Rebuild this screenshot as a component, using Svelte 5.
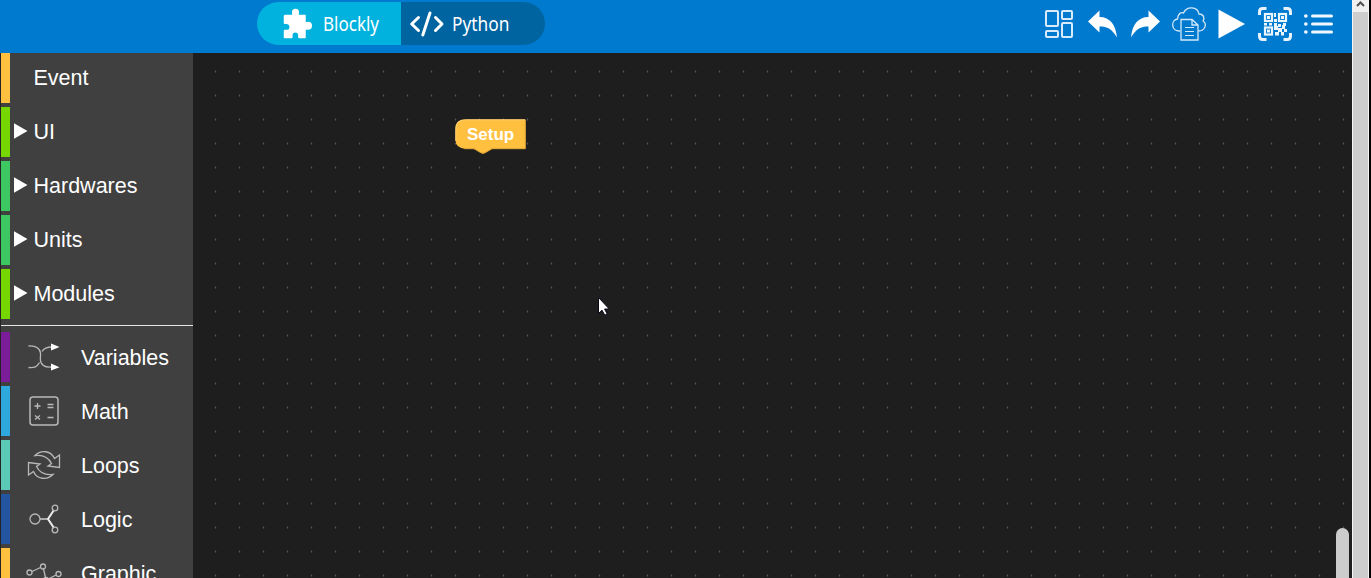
<script>
  const groups = [
    { name: 'Event', color: '#ffbf3f', open: false },
    { name: 'UI', color: '#76d700', open: true },
    { name: 'Hardwares', color: '#3cc763', open: true },
    { name: 'Units', color: '#3cc763', open: true },
    { name: 'Modules', color: '#76d700', open: true }
  ];
  const tools = [
    { name: 'Variables', color: '#7b1d99' },
    { name: 'Math', color: '#2fa8dd' },
    { name: 'Loops', color: '#5bcbb8' },
    { name: 'Logic', color: '#2355a0' },
    { name: 'Graphic', color: '#ffbf3f' }
  ];
</script>

<div class="app">
  <div class="main">
    <header>
      <div class="modes">
        <div class="mode active">
          <svg class="puzzle" width="30" height="31" viewBox="0 0 30 31" fill="#fff" stroke="#fff" stroke-width="1.500" stroke-linejoin="round"><path d="M2 7.500h7.500c1 0 .2-1.700.2-3.200a2.800 2.800 0 0 1 5.600 0c0 1.500-.8 3.200.5 3.200H22V14c0 1.300 1.500.5 3 .5a3.300 3.300 0 0 1 0 6.600c-1.500 0-3-1-3 .4V29.500h-5.500c-1.300 0-.3-1.300-.5-2.700a3.700 3.700 0 0 0-7.300 0c0 1.400.8 2.700-.5 2.700H1.500V23c0-1 .8-.4 2-.4a3.700 3.700 0 0 0 0-7.400c-1.200 0-2 .6-2-.4V8Z"/></svg>
          <span class="lb">Blockly</span>
        </div>
        <div class="mode python">
          <svg width="36" height="27" viewBox="0 0 36 27" fill="none" stroke="#fff" stroke-width="3" stroke-linecap="round" stroke-linejoin="round"><path d="M9.500 7.500 2.700 14l6.800 6.500M26.500 7.500 33 14l-6.500 6.500M21 3l-7.200 22"/></svg>
          <span class="lp">Python</span>
        </div>
      </div>
      <svg class="actions" width="296" height="40" viewBox="1042 2 296 40" fill="none" stroke="#fff">
        <g stroke="#d8ebfa" stroke-width="2"><rect x="1046" y="11" width="12" height="15" rx="1"/><rect x="1062" y="11" width="10" height="8" rx="1"/><rect x="1046" y="31" width="12" height="6" rx="1"/><rect x="1062" y="23" width="10" height="14" rx="1"/></g>
        <path d="M1088 21.500 1099.500 10.500v6.500c10.500 0 16.500 8 17.400 20.500-4.900-8.500-9.400-11-17.400-11v6Z" fill="#fff" stroke="none"/>
        <path d="M1160 21.500 1148.500 10.500v6.500c-10.500 0-16.500 8-17.400 20.500 4.900-8.500 9.400-11 17.400-11v6Z" fill="#fff" stroke="none"/>
        <g stroke="#d4e9f8" stroke-width="1.300"><path d="M1180 31c-9 .5-9.500-11-2.500-12 .5-6 4-7 6-6 3-7 14-7 15.500 1 4.500 0 6 4 4 7 4.500 3 2 10-4.500 10"/><path d="M1181 19.500h11l6 5.500v15h-17zM1192 19.500v5.500h6"/><path d="M1185 27.500h9m-9 4h9m-9 4h9" stroke-width="1"/></g>
        <path d="M1218.500 9.500 1245 24l-26.500 14.500Z" fill="#fff" stroke="none"/>
        <g stroke="#e6f3fc" stroke-width="3"><path d="M1259.500 15v-3q0-3.500 3-3.500h4M1283.500 8.500h4q3 0 3 3.500v3M1290.500 33v3q0 3.500-3 3.500h-4M1266.500 39.500h-4q-3 0-3-3.500v-3"/></g>
        <g stroke="#eaf5fd" stroke-width="2.200"><rect x="1265" y="14" width="7" height="7"/><rect x="1279" y="14" width="7" height="7"/><rect x="1265" y="27.500" width="7" height="7"/></g>
        <path d="M1267 16h3v3h-3zm14 0h3v3h-3zm-14 13.500h3v3h-3zM1274 13h2v4h-2zm0 6h3v3h-3zM1264 23h3v2.500h-3zm5 0h3v2.500h-3zm5 0h3v3h-3zm4 1h3v3h-3zm5-1h3v3h-3zM1274 26h4v4h-4zm4 2h4v4h-4zm4-3h3v4h-3zM1275 32h4v3.500h-4zm6 0h3v3.500h-3zm3-3h3v3h-3z" fill="#eaf5fd" stroke="none"/>
        <g stroke="#f1f8fd"><path d="M1312.500 16h19m-19 8h19m-19 8h19" stroke-width="3" stroke-linecap="round"/><path d="M1305.800 16h.1m-.1 8h.1m-.1 8h.1" stroke-width="3.600" stroke-linecap="round"/></g>
      </svg>
    </header>
    <div class="body">
      <nav>
        {#each groups as g}
          <div class="row group"><i style:background={g.color}></i><span class="tri">{#if g.open}<svg width="14" height="16" viewBox="0 0 14 16"><path d="M0 .3 13.500 8 0 15.700Z" fill="#fff"/></svg>{/if}</span><span>{g.name}</span></div>
        {/each}
        <hr />
        {#each tools as t}
          <div class="row"><i style:background={t.color}></i>
            <svg class="icon" width="36" height="34" viewBox="26 0 36 34" fill="none" stroke="#b8b8b8" stroke-width="1.300">
              {#if t.name === 'Variables'}
                <path d="M28.500 6c7-.5 11 1.500 12 7 .3 3-.5 5 0 8 1 4.500 4 6.500 11 6M28.500 27.500c6 .5 8.500-.5 11-5M42 11.500c2-3.500 5-4.500 10-4.500"/><path d="m51 3.500 8.500 3.500-8.500 3.500Zm0 20 8.500 3.700-8.500 3.300Z" fill="#fff" stroke="none"/>
              {:else if t.name === 'Math'}
                <rect x="30" y="3" width="28" height="28" rx="3" stroke-width="1.500"/><path d="M34.500 12h6m-3-3v6M47.500 10.500h6m-6 3h6M35 21.500l5 4m0-4-5 4M47.500 23.500h6"/>
              {:else if t.name === 'Loops'}
                <path d="M35 7.500c6-6 16-5 19.500 3l5-3.500v12.500l-11.500-1.500 3.500-2.500c-3-6-8.500-9-16.500-8Z M53 26.500c-6 6-16 5-19.500-3l-5 3.500v-12.500l11.500 1.500-3.500 2.500c3 6 8.500 9 16.500 8Z"/>
              {:else if t.name === 'Logic'}
                <circle cx="35" cy="17" r="5"/><path d="M40 17h7.500" stroke-width="1.800"/><path d="m54 8-6 9 6 9" stroke="#eee" stroke-width="2"/><circle cx="55" cy="6" r="2.800"/><circle cx="55" cy="28" r="2.800"/>
              {:else}
                <circle cx="29.500" cy="16.500" r="2.500"/><circle cx="43" cy="10.500" r="2.500"/><circle cx="58.500" cy="18" r="2.500"/><circle cx="46" cy="24" r="2.500"/><path d="m32 15.500 8.500-4M43.500 13l2 8.500M48.500 23l7.500-4"/>
              {/if}
            </svg><span class="label">{t.name}</span></div>
        {/each}
      </nav>
      <main>
        <svg class="dots" width="1159" height="525"><defs><pattern id="grid" x="10" y="6" width="24" height="24" patternUnits="userSpaceOnUse"><path d="M12 11h1v3h-1z" fill="#3c3c3c"/><path d="M12 12h1v1h-1z" fill="#505050"/><path d="M11 12h3v1h-3z" fill="#666" opacity=".15"/></pattern></defs><rect width="1159" height="525" fill="url(#grid)"/></svg>
        <svg class="block" width="72" height="36" viewBox="0 0 72 36"><path d="M10.500.5H70.500v29.500H37l-7 4q-2 1-4 0l-7-4H10.500Q.5 29 .5 21V9.500Q.5.5 10.500.5Z" fill="#ffbf3f"/><path d="M.8 22V9.500Q.8.800 10.500.8H70" fill="none" stroke="#ffd27a"/><path d="M70.300 1v28.700H37l-7 4q-2 1-4 0l-7-4H9.500" fill="none" stroke="#d9a236"/><text x="12" y="20.500">Setup</text></svg>
        <svg class="cursor" width="13" height="20" viewBox="0 0 13 20"><path d="M.5.5v16l3.500-3.300 2.800 5 2.400-1.200-2.600-5h4.700Z" fill="#fff" stroke="#080818"/></svg>
        <div class="thumb"></div>
      </main>
    </div>
  </div>
  <aside><div class="up"><svg width="9" height="6" viewBox="0 0 9 6"><path d="m1 5 3.500-3.500L8 5" fill="none" stroke="#505050" stroke-width="2"/></svg></div></aside>
</div>

<style>
  :global(body) { margin: 0; overflow: hidden; background: #000; }
  .app { display: flex; width: 1371px; height: 578px; overflow: hidden; font-family: "Liberation Sans", Arial, sans-serif; color: #fff; }
  .main { width: 1352px; height: 578px; display: flex; flex-direction: column; }
  header { height: 53px; flex: none; box-sizing: border-box; background: #007acf; display: flex; justify-content: space-between; align-items: flex-start; padding: 2px 14px 0 257px; }
  .modes { display: flex; width: 288px; height: 43px; border-radius: 22px; overflow: hidden; }
  .mode { display: flex; align-items: center; width: 144px; background: #0064a1; font: 19px/28px "Noto Sans", sans-serif; white-space: nowrap; box-sizing: border-box; }
  .active { background: #00b2dd; padding-left: 26px; }
  .mode span { display: block; transform-origin: 0 50%; }
  .lb { margin-left: 10px; transform: scaleX(.895); }
  .python { padding-left: 8px; }
  .lp { margin-left: 7px; transform: scaleX(.91); }
  .body { display: flex; height: 525px; }
  nav { width: 192px; border-left: 1px solid #242424; height: 525px; overflow: hidden; background: #404040; flex: none; }
  .row { display: flex; align-items: center; height: 50px; margin-bottom: 4px; font-size: 21.500px; line-height: 26px; }
  .row i { width: 9px; height: 50px; flex: none; }
  .tri { width: 19.500px; margin-left: 4px; padding-bottom: 3px; display: flex; }
  .icon { margin-left: 16px; }
  .label { margin-left: 19px; padding-top: 2px; }
  hr { height: 1px; margin: 6px 0; border: 0; background: #e4e4e4; }
  main { position: relative; width: 1159px; background: #1e1e1e; overflow: hidden; }
  .dots { display: block; }
  .block { position: absolute; left: 262px; top: 66px; }
  .block text { fill: #fff; font: bold 17px "Liberation Sans", Arial, sans-serif; }
  .cursor { position: absolute; left: 405px; top: 244px; }
  .thumb { position: absolute; left: 1143px; top: 475px; width: 13px; height: 80px; border-radius: 7px; background: #ccc; }
  aside { width: 15px; border: solid #f4f4f4; border-width: 0 1px; background: #cdcdcd; }
  .up { height: 12px; background: #f0f0f0; display: flex; justify-content: center; box-sizing: border-box; padding-top: 1px; }
</style>
